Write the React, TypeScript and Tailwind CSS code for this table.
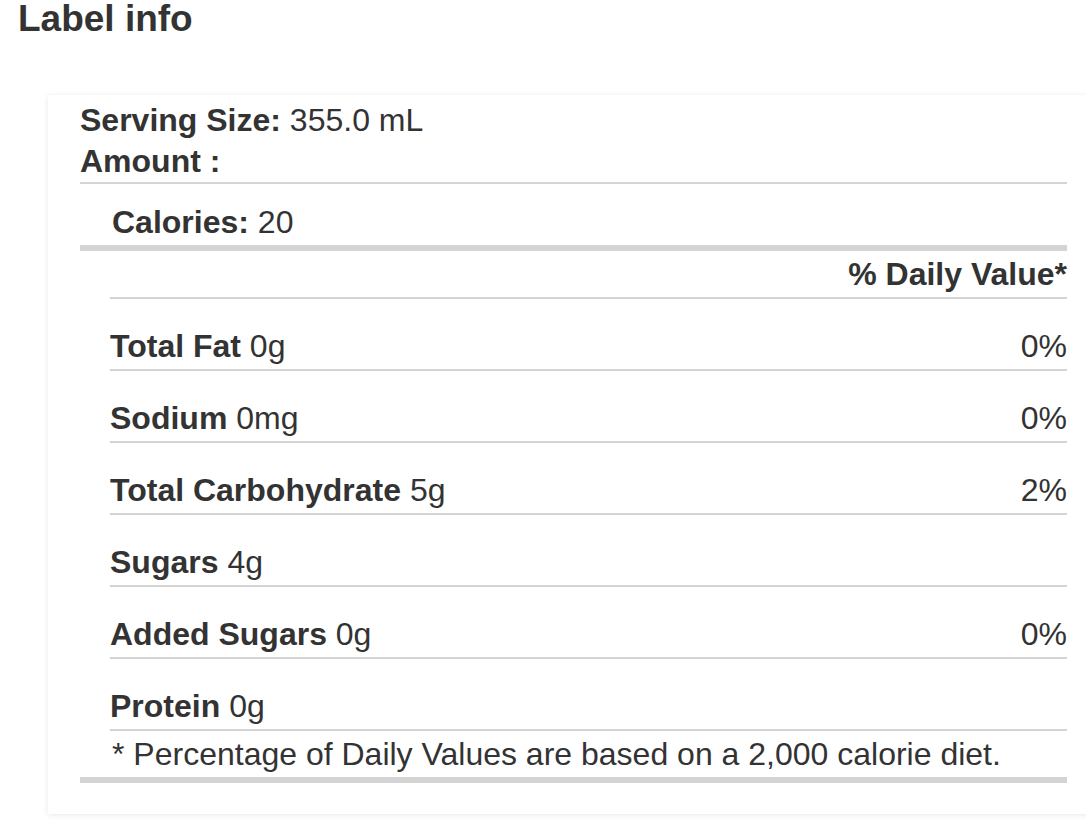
import React from 'react';

type Nutrient = {
  name: string;
  amount: string;
  dv?: string;
};

const nutrients: Nutrient[] = [
  { name: 'Total Fat', amount: '0g', dv: '0%' },
  { name: 'Sodium', amount: '0mg', dv: '0%' },
  { name: 'Total Carbohydrate', amount: '5g', dv: '2%' },
  { name: 'Sugars', amount: '4g' },
  { name: 'Added Sugars', amount: '0g', dv: '0%' },
  { name: 'Protein', amount: '0g' },
];

export default function App() {
  return (
    <div className="min-h-screen overflow-hidden bg-white font-['Liberation_Sans',Arial,sans-serif] text-[#333]">
      <h2 className="pl-[18px] text-[37px] font-bold leading-[38px]">Label info</h2>

      {/* Nutrition card */}
      <div className="ml-[48px] mt-[57px] w-[1051px] bg-white px-[32px] pb-[31px] pt-[4px] shadow-[0_1px_6px_rgba(0,0,0,0.09)]">
        <div className="text-[32px] leading-[42px]">
          <span className="font-bold">Serving Size:</span> 355.0 mL
        </div>
        <div className="border-b-2 border-[#d4d4d4] text-[32px] font-bold leading-[41px]">Amount :</div>

        <div className="border-b-[6px] border-[#d4d4d4] pb-[5px] pl-[32px] pt-[20px] text-[32px] leading-[36px]">
          <span className="font-bold">Calories:</span> 20
        </div>

        <div className="pl-[30px]">
          <div className="border-b-2 border-[#d4d4d4] py-[5px] text-right text-[32px] font-bold leading-[36px]">
            % Daily Value*
          </div>
          {nutrients.map((n) => (
            <div
              key={n.name}
              className="flex justify-between border-b-2 border-[#d4d4d4] pb-[5px] pt-[29px] text-[32px] leading-[36px]"
            >
              <span>
                <span className="font-bold">{n.name}</span> {n.amount}
              </span>
              {n.dv ? <span>{n.dv}</span> : null}
            </div>
          ))}
        </div>

        <div className="border-b-[6px] border-[#d4d4d4] py-[5px] pl-[32px] text-[32px] leading-[36px]">
          * Percentage of Daily Values are based on a 2,000 calorie diet.
        </div>
      </div>
    </div>
  );
}
